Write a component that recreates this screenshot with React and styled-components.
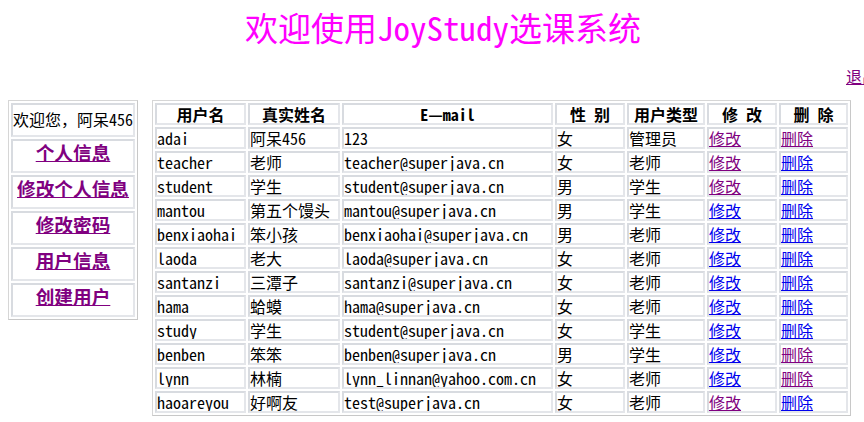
import React from "react";
import styled, { createGlobalStyle } from "styled-components";

const GlobalStyle = createGlobalStyle`
    html, body {
        margin: 0;
        padding: 0;
        overflow: hidden;
        background: #ffffff;
    }
    body {
        font-family: "Noto Sans Mono CJK SC", "Noto Sans CJK SC", sans-serif;
        font-size: 16px;
        color: #000000;
    }
`;

const users = [
    { name: "adai", real: "阿呆456", mail: "123", sex: "女", type: "管理员", edit: true, del: true },
    { name: "teacher", real: "老师", mail: "teacher@superjava.cn", sex: "女", type: "老师", edit: true, del: false },
    { name: "student", real: "学生", mail: "student@superjava.cn", sex: "男", type: "学生", edit: true, del: false },
    { name: "mantou", real: "第五个馒头", mail: "mantou@superjava.cn", sex: "男", type: "学生", edit: false, del: false },
    { name: "benxiaohai", real: "笨小孩", mail: "benxiaohai@superjava.cn", sex: "男", type: "老师", edit: false, del: false },
    { name: "laoda", real: "老大", mail: "laoda@superjava.cn", sex: "女", type: "老师", edit: false, del: false },
    { name: "santanzi", real: "三潭子", mail: "santanzi@superjava.cn", sex: "女", type: "老师", edit: false, del: false },
    { name: "hama", real: "蛤蟆", mail: "hama@superjava.cn", sex: "女", type: "老师", edit: false, del: false },
    { name: "study", real: "学生", mail: "student@superjava.cn", sex: "女", type: "学生", edit: false, del: false },
    { name: "benben", real: "笨笨", mail: "benben@superjava.cn", sex: "男", type: "学生", edit: false, del: true },
    { name: "lynn", real: "林楠", mail: "lynn_linnan@yahoo.com.cn", sex: "女", type: "老师", edit: false, del: true },
    { name: "haoareyou", real: "好啊友", mail: "test@superjava.cn", sex: "女", type: "老师", edit: true, del: false },
];

const columns = [
    { label: "用户名", width: 91 },
    { label: "真实姓名", width: 92 },
    { label: "E—mail", width: 211 },
    { label: "性 别", width: 70 },
    { label: "用户类型", width: 78 },
    { label: "修 改", width: 70 },
    { label: "删 除", width: 69 },
];

const menu = ["个人信息", "修改个人信息", "修改密码", "用户信息", "创建用户"];

function App() {
    return (
        <Page>
            <GlobalStyle />
            <Title>欢迎使用JoyStudy选课系统</Title>
            <LogoutBar>
                <LogoutLink href="#">退出</LogoutLink>
            </LogoutBar>
            <Layout>
                <MenuTable>
                    <tbody>
                        <tr>
                            <MenuCell $top={2} $lh={24}>欢迎您，阿呆456</MenuCell>
                        </tr>
                        {menu.map((m) => (
                            <tr key={m}>
                                <MenuCell $top={0} $lh={22}>
                                    <MenuLink href="#">{m}</MenuLink>
                                </MenuCell>
                            </tr>
                        ))}
                    </tbody>
                </MenuTable>
                <UserTable>
                    <thead>
                        <tr>
                            {columns.map((c) => (
                                <HeadCell key={c.label} $w={c.width}>
                                    {c.label}
                                </HeadCell>
                            ))}
                        </tr>
                    </thead>
                    <tbody>
                        {users.map((u) => (
                            <tr key={u.name}>
                                <Cell>{u.name}</Cell>
                                <Cell>{u.real}</Cell>
                                <Cell>{u.mail}</Cell>
                                <Cell>{u.sex}</Cell>
                                <Cell>{u.type}</Cell>
                                <Cell>
                                    <ActionLink href="#" $visited={u.edit}>修改</ActionLink>
                                </Cell>
                                <Cell>
                                    <ActionLink href="#" $visited={u.del}>删除</ActionLink>
                                </Cell>
                            </tr>
                        ))}
                    </tbody>
                </UserTable>
            </Layout>
        </Page>
    );
}

export default App;

const Page = styled.div`
    width: 870px;
    padding: 8px;
`;
const Title = styled.h1`
    margin: 0;
    text-align: center;
    font-size: 33px;
    font-weight: normal;
    line-height: 38px;
    color: #ff00ff;
`;
const LogoutBar = styled.div`
    display: flex;
    justify-content: flex-end;
    height: 24px;
    line-height: 24px;
    margin: 18px 0 12px;
`;
const LogoutLink = styled.a`
    color: #800080;
    text-decoration: underline;
`;
const Layout = styled.div`
    display: flex;
    align-items: flex-start;
    gap: 14px;
`;
const MenuTable = styled.table`
    width: 129px;
    border-collapse: separate;
    border-spacing: 2px;
    border: 1px solid #d6d6d6;
    border-right-color: #c8c8c8;
    border-bottom-color: #c8c8c8;
`;
const MenuCell = styled.td`
    box-sizing: border-box;
    height: 34px;
    padding: ${(p) => p.$top}px 0 0;
    line-height: ${(p) => p.$lh}px;
    vertical-align: top;
    text-align: center;
    white-space: nowrap;
    border: 2px solid #e4e6ea;
    border-top-color: #d8dbe0;
    border-left-color: #d8dbe0;
`;
const MenuLink = styled.a`
    font-size: 18.67px;
    font-weight: bold;
    color: #800080;
    text-decoration: underline;
`;
const UserTable = styled.table`
    width: 699px;
    table-layout: fixed;
    border-collapse: separate;
    border-spacing: 2px;
    border: 1px solid #d6d6d6;
    border-right-color: #c8c8c8;
    border-bottom-color: #c8c8c8;
`;
const HeadCell = styled.th`
    box-sizing: border-box;
    width: ${(p) => p.$w}px;
    height: 22px;
    padding: 1px 0 0;
    font-weight: bold;
    text-align: center;
    vertical-align: top;
    white-space: pre;
    line-height: 16px;
    border: 2px solid #e4e6ea;
    border-top-color: #d8dbe0;
    border-left-color: #d8dbe0;
`;
const Cell = styled.td`
    box-sizing: border-box;
    height: 22px;
    padding: 0;
    vertical-align: top;
    white-space: nowrap;
    overflow: hidden;
    line-height: 18px;
    border: 2px solid #e4e6ea;
    border-top-color: #d8dbe0;
    border-left-color: #d8dbe0;
`;
const ActionLink = styled.a`
    color: ${(p) => (p.$visited ? "#800080" : "#0000ee")};
    text-decoration: underline;
`;
